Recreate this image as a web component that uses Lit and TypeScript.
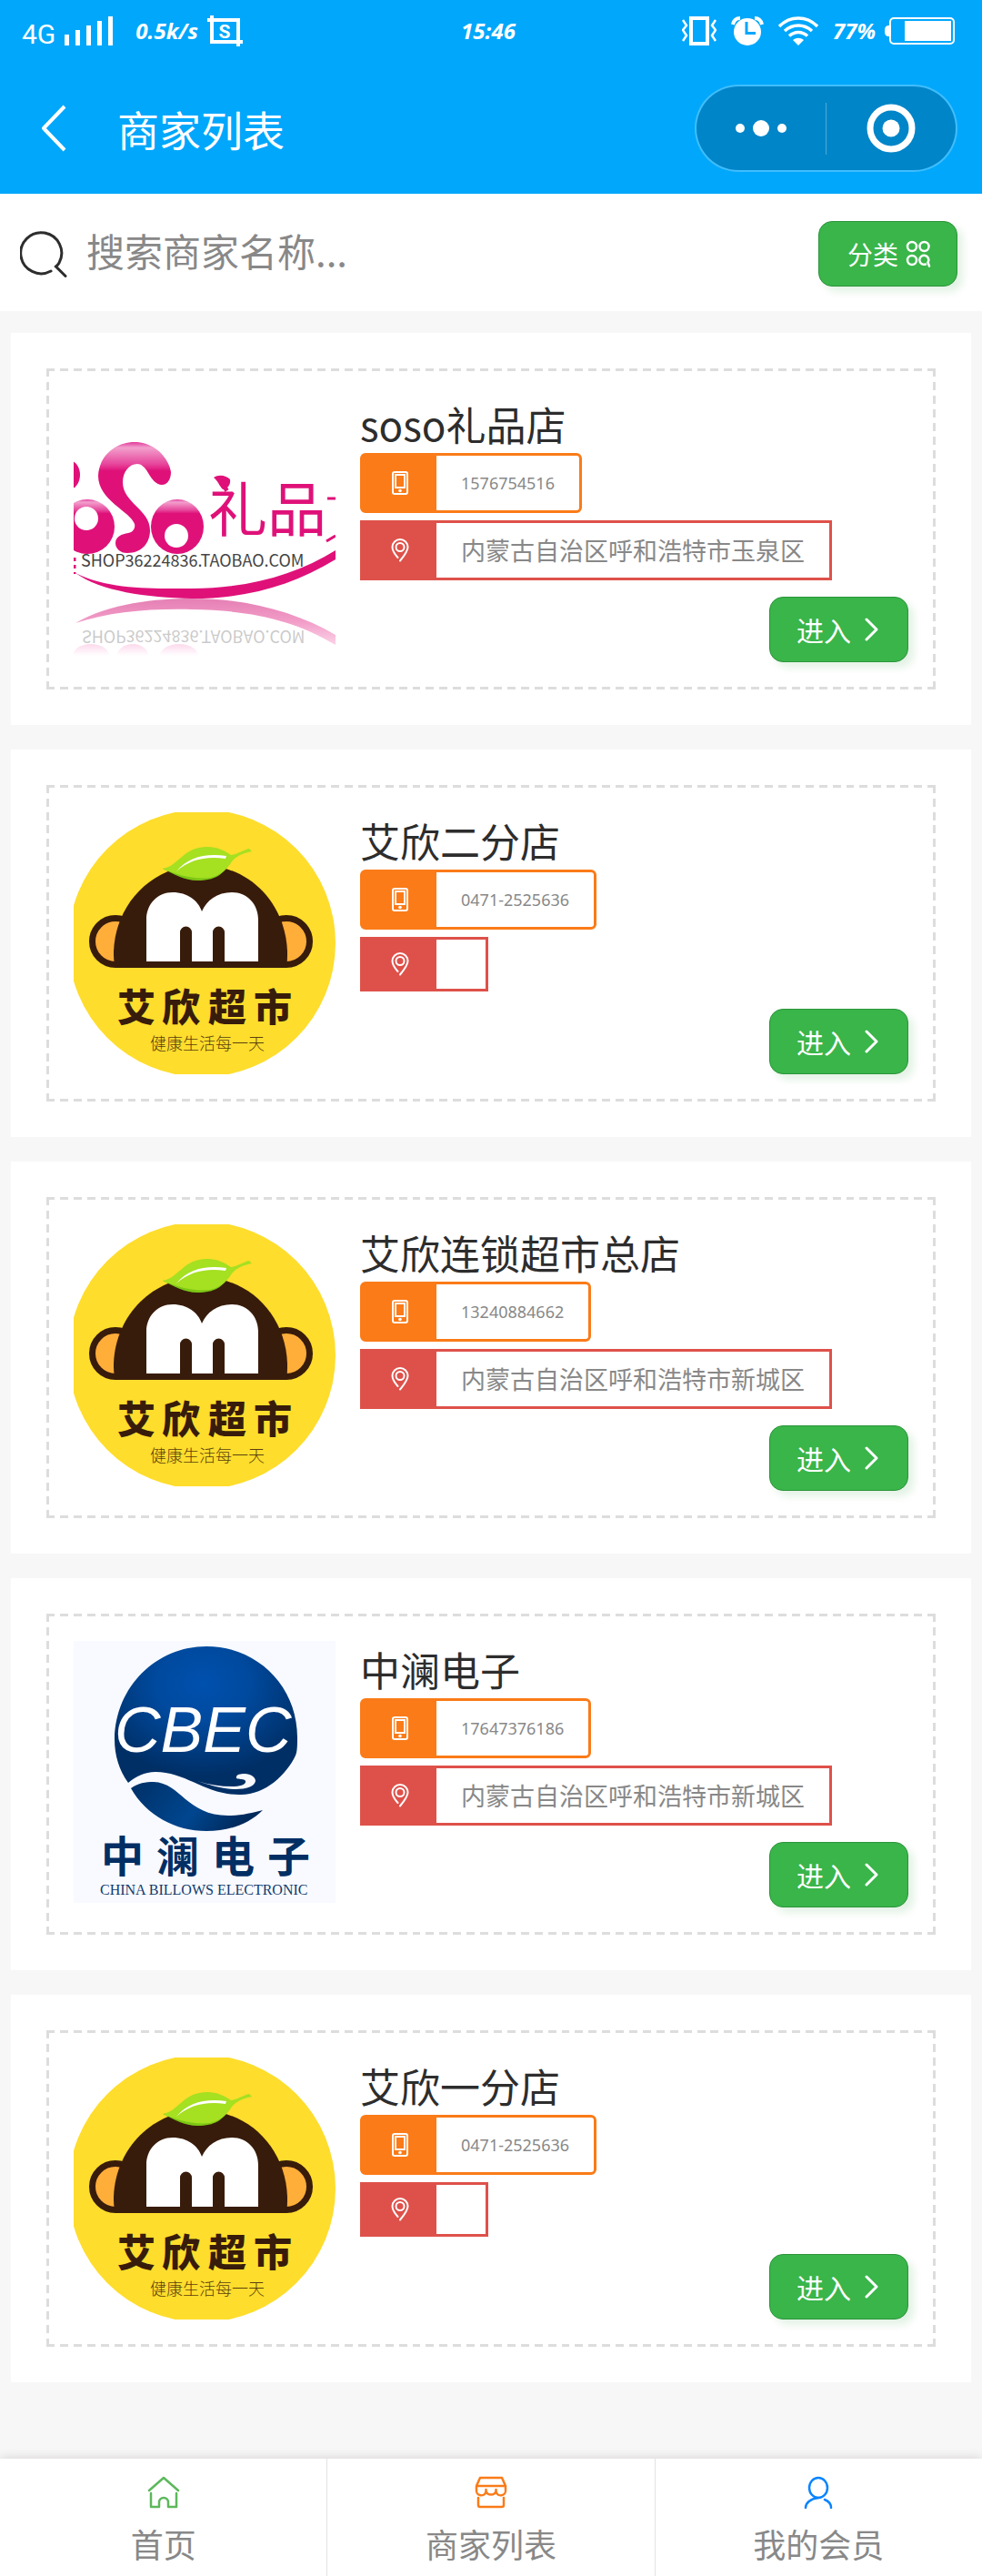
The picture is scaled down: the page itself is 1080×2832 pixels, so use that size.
import { LitElement, html, svg, css, nothing } from 'lit';
import { customElement, property } from 'lit/decorators.js';

type LogoName = 'soso' | 'monkey' | 'cbec';

interface Store {
  name: string;
  phone: string;
  address: string;
  logo: LogoName;
}

const STORES: Store[] = [
  { name: 'soso礼品店', phone: '1576754516', address: '内蒙古自治区呼和浩特市玉泉区', logo: 'soso' },
  { name: '艾欣二分店', phone: '0471-2525636', address: '', logo: 'monkey' },
  { name: '艾欣连锁超市总店', phone: '13240884662', address: '内蒙古自治区呼和浩特市新城区', logo: 'monkey' },
  { name: '中澜电子', phone: '17647376186', address: '内蒙古自治区呼和浩特市新城区', logo: 'cbec' },
  { name: '艾欣一分店', phone: '0471-2525636', address: '', logo: 'monkey' },
];

const sosoLogo = svg`
  <defs>
    <linearGradient id="gloss" x1="0" y1="0" x2="0" y2="1">
      <stop offset="0" stop-color="#e2399a" />
      <stop offset="0.05" stop-color="#f2a0cd" />
      <stop offset="0.2" stop-color="#e6459b" />
      <stop offset="0.26" stop-color="#df1179" />
    </linearGradient>
    <linearGradient id="fade" x1="0" y1="0" x2="0" y2="1">
      <stop offset="0" stop-color="#e57fb4" />
      <stop offset="0.5" stop-color="#f29dc8" />
      <stop offset="1" stop-color="#fbd3e7" />
    </linearGradient>
    <linearGradient id="mist" x1="0" y1="0" x2="0" y2="1">
      <stop offset="0" stop-color="#fcd9ec" />
      <stop offset="0.5" stop-color="#fff" />
    </linearGradient>
  </defs>
  <ellipse cx="-5" cy="87" rx="12" ry="16" fill="#df1179" />
  <circle cx="15" cy="144" r="30" fill="url(#gloss)" />
  <circle cx="14" cy="135" r="13" fill="#fff" />
  <path
    fill="url(#gloss)"
    d="M67 51C87 51 104 66 107 84C107 92 103 98 97 98C91 98 86 92 82 85C78 78 74 75 70 75C61 75 54 84 54 95C54 118 84 125 84 148C84 162 75 173 59 173C51 173 46 168 46 162C46 155 53 152 60 151C66 150 68 145 67 141C62 127 27 115 27 88C28 66 46 51 67 51Z"
  />
  <ellipse cx="114" cy="144" rx="29" ry="30" fill="url(#gloss)" />
  <circle cx="113" cy="154" r="13" fill="#fff" />
  <text x="148" y="149" font-size="65" font-weight="400" fill="#df1179">礼品</text>
  <path fill="#df1179" d="M154 90C160 86 168 88 172 92C173 98 169 103 164 103C160 99 159 94 154 90Z" />
  <path fill="none" stroke="#df1179" stroke-width="3" d="M279 113H288M278 160L288 154" />
  <path fill="#df1179" d="M2 195C40 214 90 212 130 212C190 212 245 197 288 170V180C240 209 190 223 130 223C80 222 30 215 2 195Z" />
  <path fill="url(#fade)" d="M2 250C40 228 90 223 130 223C190 223 245 238 288 263V274C240 245 190 236 130 235C80 234 40 238 2 250Z" />
  <path fill="none" stroke="#df1179" stroke-dasharray="4 4" stroke-width="3" d="M1 178V196" />
  <text x="8" y="188" font-size="18" fill="#444">SHOP36224836.TAOBAO.COM</text>
  <text x="9" y="-258" font-size="18" fill="#444" opacity="0.28" transform="scale(1 -1)">SHOP36224836.TAOBAO.COM</text>
  <ellipse cx="19" cy="286" rx="20" ry="13" fill="url(#mist)" />
  <ellipse cx="65" cy="286" rx="17" ry="13" fill="url(#mist)" />
  <ellipse cx="116" cy="286" rx="21" ry="13" fill="url(#mist)" />
`;

const monkeyLogo = svg`
  <circle cx="141" cy="144" r="147" fill="#fedd2c" />
  <circle cx="46" cy="142" r="25.5" fill="#ffae3a" stroke="#381c0b" stroke-width="7" />
  <circle cx="234" cy="142" r="25.5" fill="#ffae3a" stroke="#381c0b" stroke-width="7" />
  <path fill="#381c0b" d="M46 171C44 165 44 159 44 153C46 99 88 58 140 58S233 99 235 153C235 159 235 165 234 171Z" />
  <path
    fill="#fff"
    d="M80 164V118C80 101 92 88 109 88C125 88 137 97 141 109C146 97 158 88 174 88C191 88 203 101 203 118V164H166V132a6.5 6.5 0 0 0-13 0V164H130V132a6.5 6.5 0 0 0-13 0V164Z"
  />
  <path fill="#7cc614" d="M98 62C110 68 122 75 136 75C156 75 164 68 168 60L160 56Z" />
  <path
    fill="#a5e021"
    d="M98 62C116 59 120 38 147 38C158 38 166 42 173 47C181 46 187 41 193 40L196 43C186 45 179 48 174 54C169 62 163 69 150 72C130 74 112 68 98 62Z"
  />
  <path fill="#fff" d="M113 65C126 49 145 45 168 48L167 51C145 48 128 52 113 65Z" />
  <text x="48 97 148 198" y="230" font-size="42" font-weight="900" fill="#381c0b">艾欣超市</text>
  <text x="84" y="261" font-size="18" font-weight="300" fill="#5c400f">健康生活每一天</text>
`;

const cbecLogo = svg`
  <defs>
    <radialGradient id="globe" cx="0.48" cy="0.25" r="0.62">
      <stop offset="0" stop-color="#0050ae" />
      <stop offset="0.4" stop-color="#004a9f" />
      <stop offset="1" stop-color="#002f66" />
    </radialGradient>
    <linearGradient id="billow" x1="0" y1="0" x2="1" y2="0.3">
      <stop offset="0" stop-color="#003066" />
      <stop offset="0.6" stop-color="#00468f" />
      <stop offset="1" stop-color="#002a5c" />
    </linearGradient>
  </defs>
  <rect width="288" height="288" fill="#f8faff" />
  <path
    fill="url(#globe)"
    d="M60 156C50 142 45 126 45 108C46 50 91 6 146 6C202 6 246 50 246 106C246 114 246 122 244 126C234 147 211 169 184 169C146 170 124 144 90 144C78 144 68 149 60 156Z"
  />
  <path
    fill="url(#billow)"
    d="M63 162C71 156 79 155 88 155C118 156 124 192 170 192C184 192 197 189 208 186C192 202 170 209 146 209C112 209 80 192 63 162Z"
  />
  <path
    fill="#f8faff"
    d="M136 154C149 158 161 160 174 160C183 160 190 158 189 154C187 151 183 153 179 151C178 147 183 146 188 146C195 146 200 150 200 154C199 160 190 163 178 163C163 163 149 158 136 154Z"
  />
  <text class="sans" x="45" y="122" font-size="70" font-style="italic" fill="#fff">CBEC</text>
  <text x="30 91 152 213" y="254" font-size="47" font-weight="700" fill="#012e63">中澜电子</text>
  <text class="serif" x="29" y="279" font-size="16" fill="#123b6c">CHINA BILLOWS ELECTRONIC</text>
`;

const LOGOS = { soso: sosoLogo, monkey: monkeyLogo, cbec: cbecLogo };

@customElement('store-card')
export class StoreCard extends LitElement {
  static styles = css`
    :host {
      display: block;
      padding: 39px;
      background: #fff;
      font-family: 'Noto Sans CJK SC', sans-serif;
    }

    /* Dashes of 9px with 6px gaps, solid at the corners */
    .frame {
      display: flex;
      gap: 27px;
      padding: 27px;
      border: 3px solid transparent;
      border-image: url("data:image/svg+xml,%3Csvg xmlns='http://www.w3.org/2000/svg' width='39' height='39'%3E%3Cpath fill='%23ddd' d='M0 0h9v3H3v6H0zM15 0h9v3h-9zM30 0h9v9h-3V3h-6zM0 15h3v9H0zM36 15h3v9h-3zM0 30h3v6h6v3H0zM15 36h9v3h-9zM30 36h6v-6h3v9h-9z'/%3E%3C/svg%3E")
        12 / 12px round;
    }

    .logo {
      display: block;
      flex: none;
      width: 288px;
      height: 288px;
      overflow: hidden;
    }

    .sans {
      font-family: 'Liberation Sans', sans-serif;
    }

    .serif {
      font-family: 'Liberation Serif', serif;
    }

    .info {
      display: flex;
      flex: 1;
      flex-direction: column;
      align-items: flex-start;
      min-width: 0;
    }

    .name {
      margin: 0;
      font-size: 44px;
      line-height: 63px;
      font-weight: 400;
      color: #2d2d2d;
    }

    .tag {
      display: flex;
      box-sizing: border-box;
      min-height: 60px;
      margin-bottom: 8px;
      border: 3px solid;
      line-height: 60px;
    }

    .tag:last-of-type {
      margin-bottom: 18px;
    }

    .phone {
      border-color: #fa7b18;
      border-radius: 6px;
      background: #fa7b18;
      font-family: 'Noto Sans', sans-serif;
      font-size: 18px;
    }

    .address {
      border-color: #de514a;
      background: #de514a;
      font-size: 27px;
    }

    .tag-icon {
      display: flex;
      align-items: center;
      justify-content: center;
      width: 81px;
    }

    .tag-text {
      padding: 0 27px;
      background: #fff;
      color: #888;
    }

    .phone .tag-text {
      border-radius: 0 3px 3px 0;
    }

    .enter {
      display: flex;
      align-items: center;
      justify-content: center;
      gap: 15px;
      box-sizing: border-box;
      height: 72px;
      margin-top: auto;
      margin-left: auto;
      padding: 0 32px 0 29px;
      border: 1px solid #2c943a;
      border-radius: 15px;
      background: #39b54a;
      box-shadow: 6px 6px 8px rgba(26, 152, 38, 0.12);
      color: #fff;
      font: inherit;
      font-size: 30px;
    }
  `;

  @property({ attribute: false }) store!: Store;

  render() {
    const { name, phone, address, logo } = this.store;
    return html`
      <article class="frame">
        <svg class="logo" viewBox="0 0 288 288" role="img" aria-label=${name}>${LOGOS[logo]}</svg>
        <div class="info">
          <h2 class="name">${name}</h2>
          <div class="tag phone">
            <span class="tag-icon">
              <svg width="18" height="26" viewBox="0 0 18 26" fill="none" stroke="#fff">
                <rect x="1" y="1" width="16" height="24" rx="2" stroke-width="2" />
                <rect x="4" y="4" width="10" height="14" stroke-width="2" />
                <circle cx="9" cy="21.5" r="1.8" fill="#fff" stroke="none" />
              </svg>
            </span>
            <span class="tag-text">${phone}</span>
          </div>
          <div class="tag address">
            <span class="tag-icon">
              <svg width="20" height="26" viewBox="0 0 20 26" fill="none" stroke="#fff" stroke-width="2" stroke-linecap="round">
                <path d="M7.5 21C3 16 1.5 12.5 1.5 9.5a8.5 8.5 0 0 1 17 0C18.5 14 15 18.5 10 24.5" />
                <circle cx="10" cy="9.5" r="4.5" />
              </svg>
            </span>
            <span class="tag-text">${address || nothing}</span>
          </div>
          <button class="enter" type="button">
            进入
            <svg width="15" height="26" viewBox="0 0 15 26" fill="none" stroke="#fff" stroke-width="3" stroke-linecap="round" stroke-linejoin="round">
              <path d="M2 2l11 11L2 24" />
            </svg>
          </button>
        </div>
      </article>
    `;
  }
}

@customElement('app-root')
export class AppRoot extends LitElement {
  static styles = css`
    :host {
      display: flex;
      flex-direction: column;
      min-height: 100vh;
      background: #f7f7f7;
      font-family: 'Noto Sans CJK SC', sans-serif;
    }

    svg {
      display: block;
      flex: none;
    }

    button {
      border: 0;
      padding: 0;
      background: none;
      color: inherit;
      font: inherit;
    }

    .header {
      padding-bottom: 24px;
      background: #00a7fb;
      color: #fff;
    }

    .status {
      display: grid;
      grid-template-columns: 1fr auto 1fr;
      align-items: center;
      height: 68px;
      padding: 0 30px 0 24px;
      font: italic 700 24px/68px 'Noto Sans', sans-serif;
    }

    .status-left,
    .status-right {
      display: flex;
      align-items: center;
      gap: 10px;
    }

    .status-right {
      justify-content: flex-end;
      gap: 16px;
    }

    .battery {
      display: flex;
      align-items: center;
      gap: 10px;
    }

    .network {
      padding-top: 8px;
      font: 400 30px/60px Roboto, sans-serif;
    }

    .speed {
      padding-left: 15px;
    }

    .nav {
      display: flex;
      align-items: center;
      padding: 25px 27px 0 45px;
    }

    .title {
      flex: 1;
      margin: 0;
      padding-left: 56px;
      font-size: 46px;
      line-height: 96px;
      font-weight: 400;
    }

    .capsule {
      display: flex;
      align-items: center;
      box-sizing: border-box;
      width: 289px;
      height: 96px;
      border: 2px solid rgba(255, 255, 255, 0.25);
      border-radius: 48px;
      background: rgba(0, 0, 0, 0.2);
      background-clip: padding-box;
    }

    .capsule button {
      display: flex;
      flex: 1;
      align-items: center;
      justify-content: center;
      height: 57px;
    }

    .capsule button + button {
      border-left: 1px solid rgba(255, 255, 255, 0.3);
    }

    .search {
      display: flex;
      align-items: center;
      padding: 30px 27px 27px 22px;
      background: #fff;
    }

    .search-field {
      display: flex;
      flex: 1;
      align-items: center;
      gap: 21px;
    }

    .search-input {
      flex: 1;
      box-sizing: border-box;
      min-width: 0;
      height: 72px;
      border: 0;
      padding: 0 0 10px;
      outline: 0;
      background: none;
      color: #2d2d2d;
      font: inherit;
      font-size: 42px;
    }

    .search-input::placeholder {
      color: #888;
      opacity: 1;
    }

    .category {
      display: flex;
      align-items: center;
      justify-content: center;
      gap: 8px;
      box-sizing: border-box;
      height: 72px;
      padding: 0 28px 0 31px;
      border: 1px solid #2c943a;
      border-radius: 15px;
      background: #39b54a;
      box-shadow: 6px 6px 8px rgba(26, 152, 38, 0.12);
      color: #fff;
      font-size: 28px;
    }

    .stores {
      display: flex;
      flex: 1;
      flex-direction: column;
      gap: 27px;
      padding: 24px 12px 84px;
    }

    .tabs {
      display: flex;
      position: sticky;
      bottom: 0;
      background: #fff;
      box-shadow: 0 0 12px rgba(30, 0, 15, 0.16);
    }

    .tab {
      display: flex;
      flex: 1;
      flex-direction: column;
      align-items: center;
      gap: 11px;
      padding: 19px 0 9px;
      color: #888;
      font-size: 36px;
      line-height: 54px;
      text-decoration: none;
    }

    .tab + .tab {
      border-left: 1px solid #e2e2e2;
    }
  `;

  private renderStatus() {
    return html`
      <div class="status">
        <div class="status-left">
          <span class="network">4G</span>
          <svg width="53" height="34" viewBox="0 0 53 34" fill="#fff">
            <path d="M0 21h5v12H0zM12 16h5v17h-5zM24 11h5v22h-5zM36 6h5v27h-5zM48 1h5v32h-5z" />
          </svg>
          <span class="speed">0.5k/s</span>
          <svg width="39" height="34" viewBox="0 0 39 34">
            <path fill="none" stroke="#fff" stroke-width="4" d="M0 5H34V34M5 0V29H39" />
            <text x="19" y="25" text-anchor="middle" font-family="Roboto" font-size="21" font-weight="700" font-style="normal" fill="#fff">S</text>
          </svg>
        </div>
        <span>15:46</span>
        <div class="status-right">
          <svg width="38" height="32" viewBox="0 0 38 32" fill="none" stroke="#fff">
            <rect x="10" y="2" width="18" height="28" stroke-width="4" />
            <path stroke-width="2.5" d="M1 4l4 6-4 5 4 6-4 6M37 4l-4 6 4 5-4 6 4 6" />
          </svg>
          <svg width="36" height="32" viewBox="0 0 36 32">
            <circle cx="18" cy="17" r="15" fill="#fff" />
            <path fill="none" stroke="#fff" stroke-width="4" d="M2 9C3 4 6 2 10 2M34 9C33 4 30 2 26 2" />
            <path fill="none" stroke="#00a7fb" stroke-width="3" d="M17 6v12.5h10" />
          </svg>
          <svg width="44" height="32" viewBox="0 0 44 32" fill="none" stroke="#fff" stroke-width="3.5">
            <path d="M1 11C13-1 31-1 43 11M7 16C16 8 28 8 37 16M12 21.5C18 16 26 16 32 21.5" />
            <path fill="#fff" stroke="none" d="M16 26C20 23 24 23 28 26L22 32Z" />
          </svg>
          <div class="battery">
            <span>77%</span>
            <svg width="77" height="30" viewBox="0 0 77 30" fill="#fff">
              <path d="M5 9v12C1 21 0 19 0 15S1 9 5 9Z" />
              <rect x="6" y="1" width="70" height="28" rx="4" fill="none" stroke="#fff" stroke-width="2" />
              <path d="M22 4h51v22H22z" />
            </svg>
          </div>
        </div>
      </div>
    `;
  }

  private renderTabs() {
    return html`
      <nav class="tabs">
        <a class="tab" href="#home">
          <svg width="36" height="36" viewBox="0 0 36 36" fill="none" stroke="#5cb85c" stroke-width="2.5" stroke-linecap="round" stroke-linejoin="round">
            <path d="M2 16L18 2l16 14M4 19v15h9v-5a5 5 0 0 1 10 0v5h9V19" />
          </svg>
          首页
        </a>
        <a class="tab" href="#stores">
          <svg width="36" height="36" viewBox="0 0 36 36" fill="none" stroke="#fa7b18" stroke-width="2.5" stroke-linecap="round" stroke-linejoin="round">
            <path d="M6 2h24l4 9v4a5 5 0 0 1-10.5 2a6 6 0 0 1-11 0A5 5 0 0 1 2 15v-4zM2 11h32M12.5 15v2M23.5 15v2M4 24v8q0 2 2 2h24q2 0 2-2v-8" />
          </svg>
          商家列表
        </a>
        <a class="tab" href="#member">
          <svg width="36" height="36" viewBox="0 0 36 36" fill="none" stroke="#0a84ff" stroke-width="2.5" stroke-linecap="round">
            <ellipse cx="18" cy="13" rx="10" ry="11" />
            <path d="M18 24C9 25 4 30 4 35M25 26C30 28 32 31 32 35" />
          </svg>
          我的会员
        </a>
      </nav>
    `;
  }

  render() {
    return html`
      <header class="header">
        ${this.renderStatus()}
        <div class="nav">
          <button type="button" aria-label="返回">
            <svg width="28" height="52" viewBox="0 0 28 52" fill="none" stroke="#fff" stroke-width="4" stroke-linejoin="round">
              <path d="M26 2L3 26l23 24" />
            </svg>
          </button>
          <h1 class="title">商家列表</h1>
          <div class="capsule">
            <button type="button" aria-label="更多">
              <svg width="56" height="20" viewBox="0 0 56 20" fill="#fff">
                <circle cx="5" cy="10" r="5" />
                <circle cx="28" cy="10" r="9" />
                <circle cx="51" cy="10" r="5" />
              </svg>
            </button>
            <button type="button" aria-label="关闭">
              <svg width="54" height="54" viewBox="0 0 54 54">
                <circle cx="27" cy="27" r="23" fill="none" stroke="#fff" stroke-width="7" />
                <circle cx="27" cy="27" r="9.5" fill="#fff" />
              </svg>
            </button>
          </div>
        </div>
      </header>

      <form class="search" @submit=${(e: Event) => e.preventDefault()}>
        <label class="search-field">
          <svg width="52" height="52" viewBox="0 0 52 52" fill="none" stroke="#2d2d2d" stroke-width="3" stroke-linecap="round">
            <path d="M34 45A22.5 22.5 0 1 1 43 36Q42 38 39.5 40L50 50.5" />
          </svg>
          <input class="search-input" type="text" placeholder="搜索商家名称..." aria-label="搜索商家名称" />
        </label>
        <button class="category" type="button">
          分类
          <svg width="28" height="30" viewBox="0 0 28 30" fill="none" stroke="#fff" stroke-width="2.5" stroke-linecap="round">
            <circle cx="7" cy="7" r="5" />
            <circle cx="20.5" cy="7" r="5" />
            <circle cx="7" cy="22" r="5" />
            <path d="M22 26.5A5 5 0 1 1 24.5 24.5L26 28.5" />
          </svg>
        </button>
      </form>

      <main class="stores">${STORES.map((store) => html`<store-card .store=${store}></store-card>`)}</main>

      ${this.renderTabs()}
    `;
  }
}

declare global {
  interface HTMLElementTagNameMap {
    'app-root': AppRoot;
    'store-card': StoreCard;
  }
}
